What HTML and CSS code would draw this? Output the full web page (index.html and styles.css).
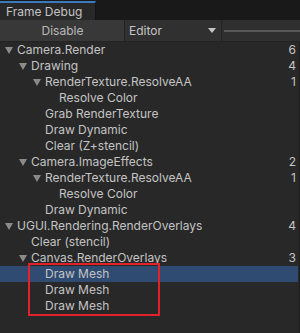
FILE: index.html
```html
<!DOCTYPE html>
<html>
<head>
<meta charset="utf-8">
<link rel="stylesheet" href="styles.css">
</head>
<body>
<div class="window">
  <div class="tabstrip">
    <div class="tab">Frame Debug</div>
  </div>
  <div class="toolbar">
    <div class="btn disable">Disable</div>
    <div class="btn dropdown"><span>Editor</span><span class="arrow"></span></div>
    <div class="slider"><div class="track"></div></div>
  </div>
  <div class="tree">
    <div class="row d0"><span class="tri"></span><span class="label">Camera.Render</span><span class="count">6</span></div>
    <div class="row d1"><span class="tri"></span><span class="label">Drawing</span><span class="count">4</span></div>
    <div class="row d2"><span class="tri"></span><span class="label">RenderTexture.ResolveAA</span><span class="count">1</span></div>
    <div class="row d3"><span class="label">Resolve Color</span></div>
    <div class="row d2"><span class="label">Grab RenderTexture</span></div>
    <div class="row d2"><span class="label">Draw Dynamic</span></div>
    <div class="row d2"><span class="label">Clear (Z+stencil)</span></div>
    <div class="row d1"><span class="tri"></span><span class="label">Camera.ImageEffects</span><span class="count">2</span></div>
    <div class="row d2"><span class="tri"></span><span class="label">RenderTexture.ResolveAA</span><span class="count">1</span></div>
    <div class="row d3"><span class="label">Resolve Color</span></div>
    <div class="row d2"><span class="label">Draw Dynamic</span></div>
    <div class="row d0"><span class="tri"></span><span class="label">UGUI.Rendering.RenderOverlays</span><span class="count">4</span></div>
    <div class="row d1"><span class="label">Clear (stencil)</span></div>
    <div class="row d1"><span class="tri"></span><span class="label">Canvas.RenderOverlays</span><span class="count">3</span></div>
    <div class="highlight-group">
      <div class="row d2 selected"><span class="label">Draw Mesh</span></div>
      <div class="row d2"><span class="label">Draw Mesh</span></div>
      <div class="row d2"><span class="label">Draw Mesh</span></div>
      <div class="redbox"></div>
    </div>
  </div>
</div>
</body>
</html>
```

FILE: styles.css
```css
html, body {
  margin: 0;
  padding: 0;
  background: #282828;
}
body {
  font-family: Inter, "Noto Sans", sans-serif;
  font-size: 12px;
  color: #c4c4c4;
}
.window {
  width: 300px;
  height: 333px;
  overflow: hidden;
  display: flex;
  flex-direction: column;
  background: #282828;
}
.tabstrip {
  height: 20px;
  background: #191919;
  display: flex;
  align-items: flex-end;
}
.tab {
  width: 94px;
  height: 17px;
  border-top: 2px solid #3a79bb;
  border-right: 1px solid #131313;
  background: #282828;
  padding-left: 6px;
  box-sizing: content-box;
  line-height: 17px;
  color: #c4c4c4;
  width: 89px;
}
.toolbar {
  height: 21px;
  display: flex;
  background: #3c3c3c;
  border-bottom: 1px solid #232323;
}
.btn {
  height: 21px;
  line-height: 21px;
  background: #383838;
  border-right: 1px solid #232323;
  box-sizing: border-box;
}
.disable {
  width: 125px;
  text-align: center;
  color: #b8b8b8;
  padding-left: 1px;
}
.dropdown {
  width: 97px;
  padding-left: 4px;
  padding-right: 4px;
  display: flex;
  align-items: center;
  justify-content: space-between;
  background: #303030;
}
.arrow {
  width: 0;
  height: 0;
  border-left: 4px solid transparent;
  border-right: 4px solid transparent;
  border-top: 5px solid #c4c4c4;
  margin-right: 1px;
}
.slider {
  flex: 1;
  display: flex;
  align-items: center;
  background: #2f2f2f;
  padding-left: 2px;
}
.track {
  flex: 1;
  height: 2px;
  background: #585858;
}
.tree {
  flex: 1;
  border-right: 1px solid #1e1e1e;
  padding-right: 1px;
}
.row {
  height: 16px;
  line-height: 16px;
  display: flex;
  align-items: center;
  position: relative;
  white-space: nowrap;
}
.row .label {
  flex: 1;
}
.row .count {
  padding-right: 2px;
}
.tri {
  width: 0;
  height: 0;
  border-left: 4px solid transparent;
  border-right: 4px solid transparent;
  border-top: 7px solid #8a8a8a;
  margin-right: 4px;
  margin-top: 1px;
}
.d0 { padding-left: 17px; }
.d1 { padding-left: 31px; }
.d2 { padding-left: 45px; }
.d3 { padding-left: 59px; }
.d0 .tri { margin-left: -12px; }
.d1 .tri { margin-left: -12px; }
.d2 .tri { margin-left: -12px; }
.selected {
  background: #2f4b72;
}
.highlight-group {
  position: relative;
}
.redbox {
  position: absolute;
  left: 28px;
  top: -3px;
  width: 128px;
  height: 49px;
  border: 2px solid #e3212a;
}
```
